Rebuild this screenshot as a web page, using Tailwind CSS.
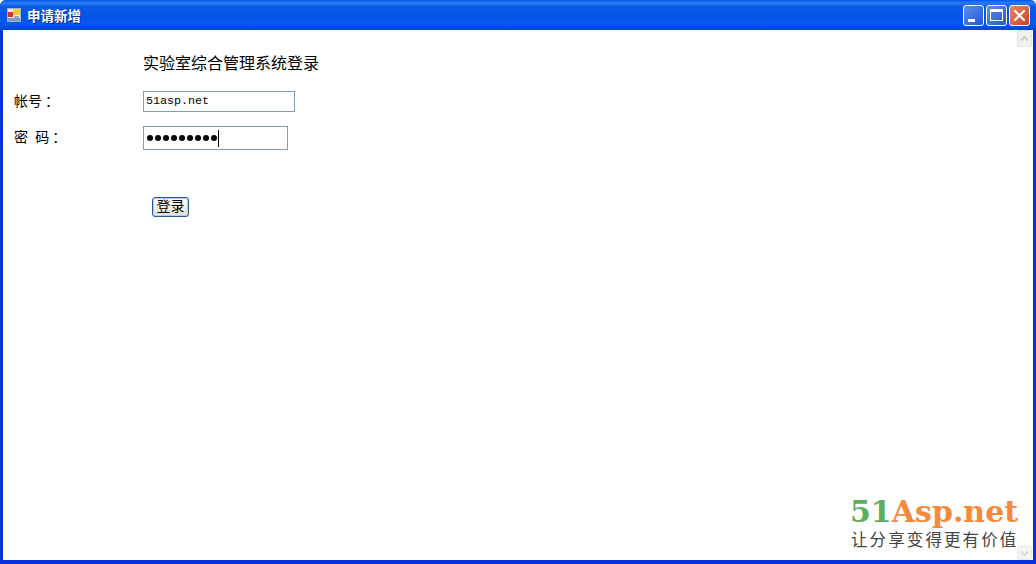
<!DOCTYPE html>
<html lang="zh">
<head>
<meta charset="utf-8">
<script src="https://cdn.jsdelivr.net/npm/@tailwindcss/browser@4"></script>
</head>
<body class="w-[1036px] h-[564px] overflow-hidden bg-white font-['Noto_Sans_CJK_TC','Liberation_Sans',sans-serif]">
<div class="w-full h-full flex flex-col bg-[#0831d9] rounded-t-[6px] overflow-hidden">
  <div class="h-[30px] shrink-0 flex items-center pl-[7px] pr-[6px] bg-[linear-gradient(to_bottom,#0058e8_0%,#2b7cf2_10%,#0a5ae6_22%,#0453e6_55%,#0558ee_80%,#0345cf_100%)]">
    <svg class="w-[14px] h-[14px] shrink-0" viewBox="0 0 14 14">
      <rect width="14" height="14" fill="#9db5cf"/>
      <rect x="1" y="1" width="12" height="12" fill="#e8eef5"/>
      <rect x="6" y="1" width="7" height="6" fill="#f5c93a"/>
      <rect x="1" y="4" width="5" height="5" fill="#d8322a"/>
      <rect x="1" y="10" width="12" height="3" fill="#7f9cc0"/>
      <rect x="7" y="8" width="5" height="2" fill="#8fa9c8"/>
    </svg>
    <span class="ml-[6px] pt-[1px] text-[13.5px] leading-none font-bold text-white [text-shadow:1px_1px_0_#0a2a8a]">申请新增</span>
    <div class="ml-auto flex gap-[2px]">
      <div class="w-[21px] h-[21px] rounded-[3px] border border-white bg-gradient-to-br from-[#5b8df0] to-[#2557d8] relative">
        <div class="absolute left-[4px] bottom-[3px] w-[7px] h-[3px] bg-white"></div>
      </div>
      <div class="w-[21px] h-[21px] rounded-[3px] border border-white bg-gradient-to-br from-[#5b8df0] to-[#2557d8] flex items-center justify-center">
        <div class="w-[13px] h-[12px] border border-white border-t-[3px]"></div>
      </div>
      <div class="w-[21px] h-[21px] rounded-[3px] border border-white bg-gradient-to-br from-[#e8866a] to-[#c8421c] flex items-center justify-center">
        <svg class="w-[13px] h-[13px]" viewBox="0 0 13 13"><path d="M2 2 L11 11 M11 2 L2 11" stroke="#fff" stroke-width="2.2" stroke-linecap="round"/></svg>
      </div>
    </div>
  </div>
  <div class="flex-1 mx-[3px] mb-[4px] bg-white flex min-h-0">
    <div class="flex-1 relative">
      <div class="pl-[140px] pt-[22px] h-[61px] text-[16px] leading-[20px] text-black">实验室综合管理系统登录</div>
      <div class="flex items-center h-[21px]">
        <span class="w-[140px] pl-[11px] text-[14px] leading-[20px] pb-[4px] text-black">帐号<span class="ml-[3px]">：</span></span>
        <div class="w-[152px] h-[21px] border border-[#7f9db9] pl-[2px] flex items-center text-[11.7px] font-['Liberation_Mono',monospace] text-black">51asp.net</div>
      </div>
      <div class="flex items-center h-[24px] mt-[14px]">
        <span class="w-[140px] pl-[11px] text-[14px] leading-[20px] pb-[4px] [word-spacing:4px] text-black">密 码<span class="ml-[3px]">：</span></span>
        <div class="w-[145px] h-[24px] border border-[#7f9db9] pl-[3px] flex items-center">
          <span class="flex gap-[2px]">
            <i class="block w-[6px] h-[6px] rounded-full bg-black"></i><i class="block w-[6px] h-[6px] rounded-full bg-black"></i><i class="block w-[6px] h-[6px] rounded-full bg-black"></i><i class="block w-[6px] h-[6px] rounded-full bg-black"></i><i class="block w-[6px] h-[6px] rounded-full bg-black"></i><i class="block w-[6px] h-[6px] rounded-full bg-black"></i><i class="block w-[6px] h-[6px] rounded-full bg-black"></i><i class="block w-[6px] h-[6px] rounded-full bg-black"></i><i class="block w-[6px] h-[6px] rounded-full bg-black"></i>
          </span>
          <span class="block w-[1px] h-[17px] ml-[1px] bg-black"></span>
        </div>
      </div>
      <div class="ml-[149px] mt-[47px] w-[37px] h-[20px] rounded-[3px] border border-[#2a5a96] bg-gradient-to-b from-white to-[#e4e1d6] shadow-[inset_0_0_0_1px_#b4cdf0] flex items-center justify-center text-[14px] leading-none pb-[4px] text-black">登录</div>
      <div class="absolute left-[847px] top-[464px] leading-none">
        <div class="font-['DejaVu_Serif',serif] font-bold text-[30px] leading-[36px] whitespace-nowrap"><span class="text-[#5fae5b]">51</span><span class="text-[#f58a3c]">Asp.net</span></div>
        <div class="pl-[1px] text-[16.5px] leading-[20px] tracking-[2.1px] whitespace-nowrap text-[#444] mt-[-1px]">让分享变得更有价值</div>
      </div>
    </div>
    <div class="w-[17px] shrink-0 bg-white flex flex-col justify-between">
      <div class="w-[15px] h-[17px] bg-[#f1f2ee] border border-[#e4e7df] rounded-[2px] flex items-center justify-center mx-auto">
        <svg class="w-[9px] h-[7px]" viewBox="0 0 9 7"><path d="M1 5.5 L4.5 2 L8 5.5" fill="none" stroke="#c3c8bc" stroke-width="1.6"/></svg>
      </div>
      <div class="w-[15px] h-[14px] bg-[#f4f5f2] border border-[#e8eae4] rounded-[2px] mx-auto flex items-center justify-center">
        <svg class="w-[9px] h-[7px]" viewBox="0 0 9 7"><path d="M1 1.5 L4.5 5 L8 1.5" fill="none" stroke="#d4d7cf" stroke-width="1.6"/></svg>
      </div>
    </div>
  </div>
</div>
</body>
</html>
